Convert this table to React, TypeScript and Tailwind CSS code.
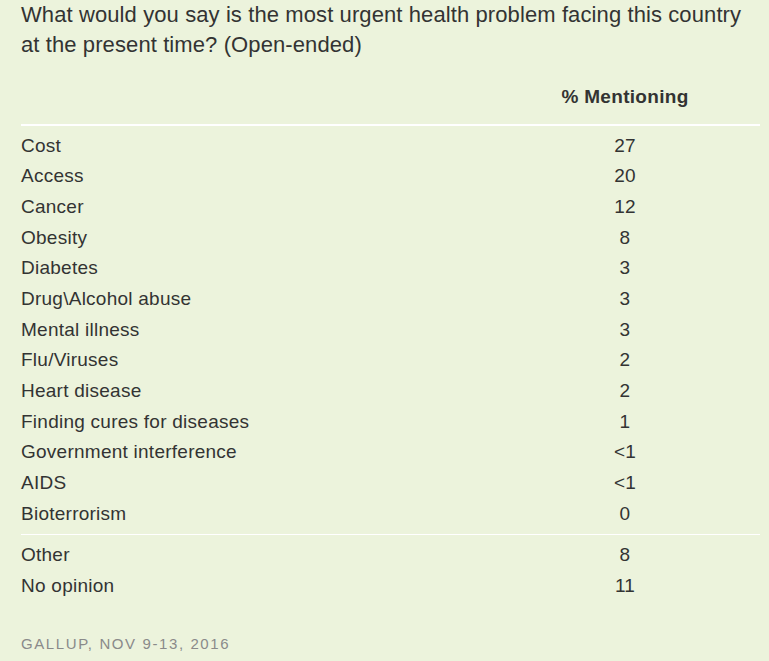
import React from "react";

const rows: [string, string][] = [
  ["Cost", "27"],
  ["Access", "20"],
  ["Cancer", "12"],
  ["Obesity", "8"],
  ["Diabetes", "3"],
  ["Drug\\Alcohol abuse", "3"],
  ["Mental illness", "3"],
  ["Flu/Viruses", "2"],
  ["Heart disease", "2"],
  ["Finding cures for diseases", "1"],
  ["Government interference", "<1"],
  ["AIDS", "<1"],
  ["Bioterrorism", "0"],
];

const extra: [string, string][] = [
  ["Other", "8"],
  ["No opinion", "11"],
];

function Row({ label, value }: { label: string; value: string }) {
  return (
    <div className="flex h-[30.7px] items-center text-[19px] tracking-[0.25px] text-[#333333]">
      <div className="flex-1">{label}</div>
      <div className="w-[130px] text-center">{value}</div>
      <div className="w-[70px]" />
    </div>
  );
}

export default function App() {
  return (
    <div
      className="min-h-[661px] w-[769px] bg-[#ecf3dc] pl-[21px] pr-[9px]"
      style={{ fontFamily: '"Liberation Sans", Arial, sans-serif' }}
    >
      <div className="pr-[10px] text-[22px] leading-[30px] tracking-[0.1px] text-[#333333]">
        What would you say is the most urgent health problem facing this country
        at the present time? (Open-ended)
      </div>
      <div className="mt-[26px] flex h-[22px] items-center text-[19px] font-bold tracking-[0.3px] text-[#333333]">
        <div className="flex-1" />
        <div className="w-[130px] text-center">% Mentioning</div>
        <div className="w-[70px]" />
      </div>
      <div className="mt-[16px] h-[2px] bg-white" />
      <div className="mt-[4.5px]">
        {rows.map(([l, v]) => (
          <Row key={l} label={l} value={v} />
        ))}
      </div>
      <div className="mt-[5px] h-px bg-white" />
      <div className="mt-[4.5px]">
        {extra.map(([l, v]) => (
          <Row key={l} label={l} value={v} />
        ))}
      </div>
      <div className="mt-[32px] text-[15px] uppercase tracking-[1.6px] text-[#8a8a8a]">
        Gallup, Nov 9-13, 2016
      </div>
    </div>
  );
}
